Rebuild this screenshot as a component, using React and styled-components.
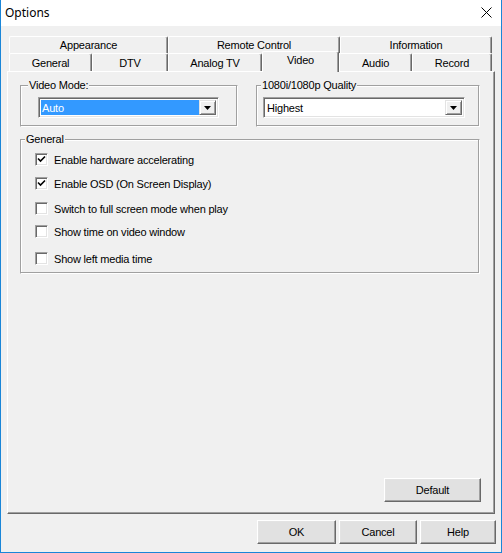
import React from "react";
import styled, { createGlobalStyle } from "styled-components";

const Global = createGlobalStyle`
  html, body { margin: 0; padding: 0; background: #f0f0f0; }
  * { box-sizing: border-box; }
`;

const Window = styled.div`
  width: 502px;
  height: 553px;
  display: flex;
  flex-direction: column;
  background: #f0f0f0;
  border-left: 1px solid #1a86d8;
  border-right: 1px solid #1a86d8;
  border-bottom: 1px solid #1a86d8;
  font-family: "Liberation Sans", Arial, sans-serif;
  font-size: 11px;
  letter-spacing: -0.2px;
  color: #000;
`;

const TitleBar = styled.div`
  height: 26px;
  flex: none;
  background: #fff;
  display: flex;
  align-items: center;
  justify-content: space-between;
  padding: 0 9px 1px 4px;
  font-family: "Noto Sans", "Open Sans", sans-serif;
  font-size: 12px;
  letter-spacing: 0;
`;

const CloseIcon = () => (
  <svg width="11" height="11" viewBox="0 0 11 11">
    <path d="M0.5 0.5 L10.5 10.5 M10.5 0.5 L0.5 10.5" stroke="#000" strokeWidth="1" fill="none" />
  </svg>
);

const Body = styled.div`
  flex: 1;
  display: flex;
  flex-direction: column;
  padding: 10px 6px 0 6px;
`;

const TabStrip = styled.div`
  margin: 0 2px;
  display: flex;
  flex-direction: column;
`;

const TabRow = styled.div`
  display: flex;
  height: ${(p) => p.$h}px;
  align-items: flex-end;
`;

const Tab = styled.div`
  position: relative;
  width: ${(p) => p.$w}px;
  height: ${(p) => (p.$active ? p.$h + 3 : p.$h)}px;
  margin-bottom: ${(p) => (p.$active ? -1 : 0)}px;
  z-index: ${(p) => (p.$active ? 2 : 1)};
  background: #f0f0f0;
  border-top: 1px solid #fff;
  border-left: 1px solid #fff;
  border-right: 1px solid #696969;
  box-shadow: inset -1px 0 0 #a0a0a0;
  border-top-left-radius: 2px;
  border-top-right-radius: 2px;
  display: flex;
  align-items: ${(p) => (p.$active ? "flex-start" : "center")};
  padding-top: ${(p) => (p.$active ? 2 : 0)}px;
  justify-content: center;
  white-space: nowrap;
`;

const Panel = styled.div`
  height: 443px;
  flex: none;
  display: flex;
  flex-direction: column;
  border-top: 1px solid #fff;
  border-left: 1px solid #fff;
  border-right: 1px solid #696969;
  border-bottom: 1px solid #696969;
  box-shadow: inset -1px -1px 0 #a0a0a0;
  padding: 13px 13px 11px 12px;
`;

const GroupRow = styled.div`
  display: flex;
  gap: 18px;
`;

const Group = styled.div`
  position: relative;
  width: ${(p) => p.$w}px;
  height: ${(p) => p.$h}px;
  margin-top: ${(p) => p.$mt || 0}px;
  border: 1px solid #dcdcdc;
  border-color: #a0a0a0 #fff #fff #a0a0a0;
  box-shadow: inset -1px -1px 0 #a0a0a0, inset 1px 1px 0 #fff;
  padding: ${(p) => p.$pad || "0"};
`;

const Legend = styled.span`
  position: absolute;
  top: -8px;
  left: ${(p) => p.$left || 7}px;
  padding: 0 1px;
  background: #f0f0f0;
  line-height: 14px;
`;

const Combo = styled.div`
  width: ${(p) => p.$w}px;
  height: 21px;
  display: flex;
  background: #fff;
  border-top: 1px solid #a0a0a0;
  border-left: 1px solid #a0a0a0;
  border-right: 1px solid #fff;
  border-bottom: 1px solid #fff;
  box-shadow: inset 1px 1px 0 #696969, inset -1px -1px 0 #e3e3e3;
  padding: 2px;
`;

const ComboText = styled.div`
  flex: 1;
  display: flex;
  align-items: center;
  padding-left: 1px;
  background: ${(p) => (p.$selected ? "#3399ff" : "#fff")};
  color: ${(p) => (p.$selected ? "#fff" : "#000")};
`;

const ComboButton = styled.div`
  width: 17px;
  display: flex;
  align-items: center;
  justify-content: center;
  background: #f0f0f0;
  border-top: 1px solid #e3e3e3;
  border-left: 1px solid #e3e3e3;
  border-right: 1px solid #696969;
  border-bottom: 1px solid #696969;
  box-shadow: inset 1px 1px 0 #fff, inset -1px -1px 0 #a0a0a0;
`;

const Arrow = () => (
  <svg width="7" height="4" viewBox="0 0 7 4">
    <path d="M0 0 H7 L3.5 4 Z" fill="#000" />
  </svg>
);

const CheckList = styled.div`
  display: flex;
  flex-direction: column;
  padding: 13px 0 0 14px;
`;

const CheckRow = styled.label`
  display: flex;
  align-items: center;
  height: 13px;
  margin-top: ${(p) => p.$mt}px;
  gap: 6px;
`;

const Box = styled.span`
  width: 13px;
  height: 13px;
  flex: none;
  background: #fff;
  border-top: 1px solid #a0a0a0;
  border-left: 1px solid #a0a0a0;
  border-right: 1px solid #fff;
  border-bottom: 1px solid #fff;
  box-shadow: inset 1px 1px 0 #696969, inset -1px -1px 0 #e3e3e3;
  display: flex;
  align-items: center;
  justify-content: center;
`;

const Check = () => (
  <svg width="9" height="9" viewBox="0 0 9 9">
    <path d="M1 3.5 L3.5 6 L8 1.5" stroke="#000" strokeWidth="1.6" fill="none" />
  </svg>
);

const Spacer = styled.div`
  flex: 1;
`;

const Button = styled.button`
  width: ${(p) => p.$w}px;
  height: ${(p) => p.$h}px;
  background: #e1e1e1;
  border-top: 1px solid #fff;
  border-left: 1px solid #fff;
  border-right: 1px solid #696969;
  border-bottom: 1px solid #696969;
  box-shadow: inset -1px -1px 0 #a0a0a0, inset 1px 1px 0 #e3e3e3;
  font-family: "Liberation Sans", Arial, sans-serif;
  font-size: 11px;
  letter-spacing: -0.2px;
  color: #000;
  padding: 0;
  align-self: ${(p) => (p.$end ? "flex-end" : "auto")};
`;

const Footer = styled.div`
  display: flex;
  justify-content: flex-end;
  gap: 3px;
  padding: 6px 0 0 0;
  margin-right: -1px;
`;

const row1 = [
  { label: "Appearance", w: 159 },
  { label: "Remote Control", w: 172 },
  { label: "Information", w: 152 },
];
const row2 = [
  { label: "General", w: 83 },
  { label: "DTV", w: 76 },
  { label: "Analog TV", w: 94 },
  { label: "Video", w: 77, active: true },
  { label: "Audio", w: 73 },
  { label: "Record", w: 80 },
];

const checks = [
  { label: "Enable hardware accelerating", on: true, mt: 0 },
  { label: "Enable OSD (On Screen Display)", on: true, mt: 11 },
  { label: "Switch to full screen mode when play", on: false, mt: 12 },
  { label: "Show time on video window", on: false, mt: 10 },
  { label: "Show left media time", on: false, mt: 14 },
];

export default function App() {
  return (
    <>
      <Global />
      <Window>
        <TitleBar>
          <span>Options</span>
          <CloseIcon />
        </TitleBar>
        <Body>
          <TabStrip>
            <TabRow $h={17}>
              {row1.map((t) => (
                <Tab key={t.label} $w={t.w} $h={17}>
                  {t.label}
                </Tab>
              ))}
            </TabRow>
            <TabRow $h={18}>
              {row2.map((t) => (
                <Tab key={t.label} $w={t.w} $h={18} $active={t.active}>
                  {t.label}
                </Tab>
              ))}
            </TabRow>
          </TabStrip>
          <Panel>
            <GroupRow>
              <Group $w={218} $h={42} $pad="11px 0 0 17px">
                <Legend>Video Mode:</Legend>
                <Combo $w={181}>
                  <ComboText $selected>Auto</ComboText>
                  <ComboButton>
                    <Arrow />
                  </ComboButton>
                </Combo>
              </Group>
              <Group $w={224} $h={42} $pad="11px 0 0 6px">
                <Legend $left={4}>1080i/1080p Quality</Legend>
                <Combo $w={202}>
                  <ComboText>Highest</ComboText>
                  <ComboButton>
                    <Arrow />
                  </ComboButton>
                </Combo>
              </Group>
            </GroupRow>
            <Group $w={460} $h={135} $mt={12}>
              <Legend $left={4}>General</Legend>
              <CheckList>
                {checks.map((c) => (
                  <CheckRow key={c.label} $mt={c.mt}>
                    <Box>{c.on && <Check />}</Box>
                    {c.label}
                  </CheckRow>
                ))}
              </CheckList>
            </Group>
            <Spacer />
            <Button $w={97} $h={24} $end>
              Default
            </Button>
          </Panel>
          <Footer>
            <Button $w={79} $h={24}>OK</Button>
            <Button $w={78} $h={24}>Cancel</Button>
            <Button $w={76} $h={24}>Help</Button>
          </Footer>
        </Body>
      </Window>
    </>
  );
}
